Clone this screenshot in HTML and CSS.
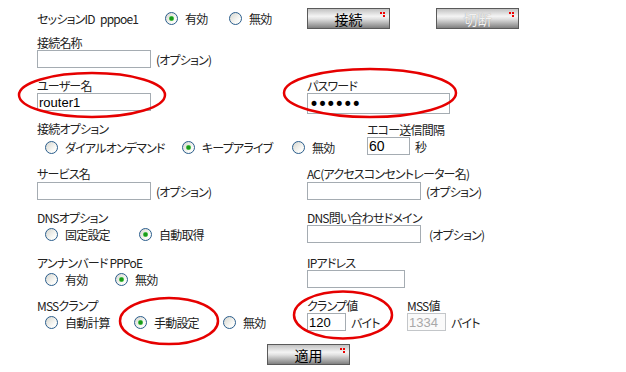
FILE: index.html
```html
<!DOCTYPE html>
<html lang="ja">

<head>
    <meta charset="UTF-8" />
    <title>PPPoE 設定</title>
    <link rel="stylesheet" href="styles.css">
</head>

<body>
    <div class="page">
        <form class="form">
            <div class="top full">
                <span>セッションID</span>
                <span>pppoe1</span>
                <span class="opts opts-top">
                    <label class="opt"><input type="radio" name="state" checked>有効</label>
                    <label class="opt"><input type="radio" name="state">無効</label>
                </span>
                <span><button type="button" class="btn">接続</button></span>
                <span><button type="button" class="btn" disabled>切断</button></span>
            </div>

            <div class="field">
                <div class="lbl">接続名称</div>
                <div class="line"><input type="text" class="txt"> <span>(オプション)</span></div>
            </div>
            <div></div>

            <div class="field">
                <div class="lbl">ユーザー名</div>
                <div class="line"><input type="text" class="txt" value="router1"></div>
            </div>
            <div class="field">
                <div class="lbl">パスワード</div>
                <div class="line"><input type="password" class="txt pw" value="secret"></div>
            </div>

            <div class="full split">
                <div class="field">
                    <div class="lbl">接続オプション</div>
                    <div class="line radios opts opts-conn">
                        <label class="opt"><input type="radio" name="conn">ダイアルオンデマンド</label>
                        <label class="opt"><input type="radio" name="conn" checked>キープアライブ</label>
                        <label class="opt"><input type="radio" name="conn">無効</label>
                    </div>
                </div>
                <div class="field echo">
                    <div class="lbl">エコー送信間隔</div>
                    <div class="line"><input type="text" class="txt num-wide" value="60"> <span>秒</span></div>
                </div>
            </div>

            <div class="field">
                <div class="lbl">サービス名</div>
                <div class="line mt1"><input type="text" class="txt"> <span>(オプション)</span></div>
            </div>
            <div class="field">
                <div class="lbl">AC(アクセスコンセントレーター名)</div>
                <div class="line mt1"><input type="text" class="txt"> <span>(オプション)</span></div>
            </div>

            <div class="field">
                <div class="lbl">DNSオプション</div>
                <div class="line opts opts-dns">
                    <label class="opt"><input type="radio" name="dns">固定設定</label>
                    <label class="opt"><input type="radio" name="dns" checked>自動取得</label>
                </div>
            </div>
            <div class="field">
                <div class="lbl">DNS問い合わせドメイン</div>
                <div class="line"><input type="text" class="txt"> <span class="far">(オプション)</span></div>
            </div>

            <div class="field">
                <div class="lbl">アンナンバード PPPoE</div>
                <div class="line opts opts-unn">
                    <label class="opt"><input type="radio" name="unn">有効</label>
                    <label class="opt"><input type="radio" name="unn" checked>無効</label>
                </div>
            </div>
            <div class="field">
                <div class="lbl">IPアドレス</div>
                <div class="line"><input type="text" class="txt ip"></div>
            </div>

            <div class="field">
                <div class="lbl">MSSクランプ</div>
                <div class="line opts opts-mss">
                    <label class="opt"><input type="radio" name="mss">自動計算</label>
                    <label class="opt"><input type="radio" name="mss" checked>手動設定</label>
                    <label class="opt"><input type="radio" name="mss">無効</label>
                </div>
            </div>
            <div class="pair">
                <div class="field clamp">
                    <div class="lbl">クランプ値</div>
                    <div class="line"><input type="text" class="txt num" value="120"> <span>バイト</span></div>
                </div>
                <div class="field">
                    <div class="lbl">MSS値</div>
                    <div class="line"><input type="text" class="txt num" value="1334" disabled> <span>バイト</span></div>
                </div>
            </div>

            <div class="full submit">
                <button type="button" class="btn">適用</button>
            </div>
        </form>

        <svg class="marks" width="626" height="372" viewBox="0 0 626 372">
            <ellipse cx="92" cy="95" rx="73" ry="22" />
            <ellipse cx="370" cy="93" rx="86" ry="24" />
            <ellipse cx="169" cy="321" rx="49" ry="23" />
            <ellipse cx="343" cy="315" rx="49" ry="23.5" />
        </svg>
    </div>
</body>

</html>
```

FILE: styles.css
```css
* {
    box-sizing: border-box
}

body {
    margin: 0;
    background: #fff;
    color: #222;
    font: 12px "Noto Sans CJK JP", sans-serif;
    font-feature-settings: "palt";
    letter-spacing: -0.8px
}

.page {
    position: relative;
    width: 626px;
    height: 372px;
    overflow: hidden
}

.form {
    display: grid;
    grid-template-columns: 270px 1fr;
    grid-template-rows: 27px 43px 43px 45px 44px 45px 43px 46px 21px;
    padding: 8px 0 0 37px
}

.full {
    grid-column: 1 / -1
}

.top {
    display: grid;
    grid-template-columns: 63px 65px 142px 129px auto;
    align-items: center;
    height: 21px;
    white-space: nowrap
}

.field {
    display: flex;
    flex-direction: column
}

.lbl {
    height: 15px;
    line-height: 15px;
    white-space: nowrap
}

.line {
    display: flex;
    align-items: center;
    gap: 5px;
    white-space: nowrap
}

.mt1 {
    margin-top: 1px
}

.far {
    margin-left: 3px
}

/* radio groups */
.opts {
    display: flex;
    align-items: center;
    height: 18px
}

.opt {
    display: flex;
    align-items: center
}

.opts-top .opt {
    width: 64px
}

.opts-conn {
    padding-left: 8px;
    margin-top: 2px
}

.opts-conn .opt:nth-child(1) {
    width: 132px
}

.opts-conn .opt:nth-child(2) {
    width: 105px
}

.opts-dns,
.opts-unn,
.opts-mss {
    padding-left: 8px
}

.opts-dns .opt:nth-child(1) {
    width: 89px
}

.opts-unn .opt:nth-child(1) {
    width: 65px
}

.opts-mss .opt {
    width: 88px
}

input[type=radio] {
    appearance: none;
    width: 13px;
    height: 13px;
    margin: 0 7px 0 0;
    border: 1px solid #2a5d8c;
    border-radius: 50%;
    background: linear-gradient(135deg, #d6d6cf, #fbfbf8 70%)
}

input[type=radio]:checked {
    background: radial-gradient(circle, #1a9a1a 0 1.6px, #7ad67a 2.4px, transparent 3px),
        linear-gradient(135deg, #d6d6cf, #fbfbf8 70%)
}

/* text boxes */
.txt {
    width: 114px;
    height: 18px;
    margin: 0;
    padding: 0 1px;
    border: 1px solid #a5acb2;
    background: #fff;
    color: #000;
    font: 13px "Liberation Sans", sans-serif;
    letter-spacing: 0
}

.pw {
    width: 143px;
    height: 21px;
    font: 17px "DejaVu Sans", sans-serif;
    letter-spacing: -1.6px
}

.ip {
    width: 98px
}

.num {
    width: 39px
}

.num-wide {
    width: 43px;
    font-size: 14px
}

.txt:disabled {
    border-color: #c3c6c9;
    background: #fafafa;
    color: #a8a8a8
}

.split {
    display: grid;
    grid-template-columns: 330px auto
}

.echo .lbl {
    margin-top: 1px
}

.pair {
    display: flex
}

.clamp {
    width: 100px
}

/* buttons */
.btn {
    position: relative;
    width: 83px;
    height: 21px;
    margin: 0;
    padding: 0;
    border: 1px solid #5a5a5a;
    background: linear-gradient(#c2c2c2, #f4f4f4 38%, #e2e2e2 52%, #a9a9a9 80%, #808080);
    color: #000;
    font: 14px "Noto Sans CJK JP", sans-serif;
    line-height: 18px;
    cursor: pointer
}

.btn::after {
    content: "";
    position: absolute;
    top: 3px;
    right: 7px;
    width: 2px;
    height: 2px;
    background: #e00;
    box-shadow: 3px 0 #e00, 3px 3px #e00
}

.btn:disabled {
    color: #f2f2f2;
    text-shadow: 0 0 1px #8a8a8a;
    cursor: default
}

.submit {
    padding-left: 230px
}

.marks {
    position: absolute;
    top: 0;
    left: 0;
    pointer-events: none
}

.marks ellipse {
    fill: none;
    stroke: #e60000;
    stroke-width: 2.5
}
```
